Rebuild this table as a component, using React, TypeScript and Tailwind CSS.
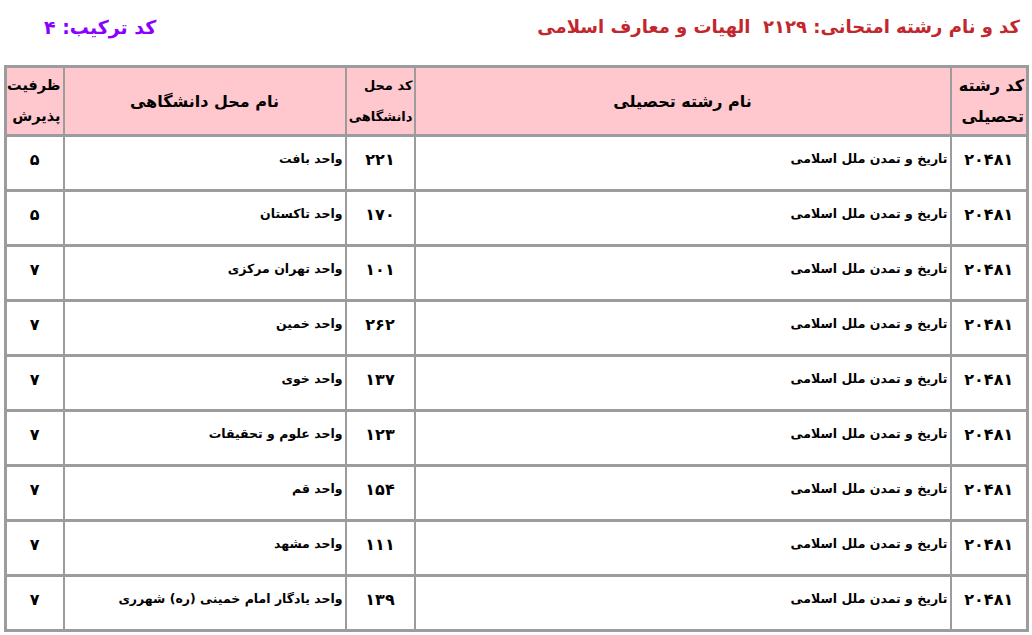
const rows: { code: string; place: string; cap: string }[] = [
  { code: "۲۲۱", place: "واحد بافت", cap: "۵" },
  { code: "۱۷۰", place: "واحد تاکستان", cap: "۵" },
  { code: "۱۰۱", place: "واحد تهران مرکزی", cap: "۷" },
  { code: "۲۶۲", place: "واحد خمین", cap: "۷" },
  { code: "۱۳۷", place: "واحد خوی", cap: "۷" },
  { code: "۱۲۳", place: "واحد علوم و تحقیقات", cap: "۷" },
  { code: "۱۵۴", place: "واحد قم", cap: "۷" },
  { code: "۱۱۱", place: "واحد مشهد", cap: "۷" },
  { code: "۱۳۹", place: "واحد یادگار امام خمینی (ره) شهرری", cap: "۷" },
];

const font = { fontFamily: '"DejaVu Sans", Tahoma, sans-serif' };

export default function App() {
  return (
    <div dir="rtl" className="h-[635px] w-[1032px] overflow-hidden bg-white" style={font}>
      <header className="flex h-[62px] items-start justify-between px-[12px] pt-[13px]">
        <h1 className="text-[18px] font-bold text-[#c1272d]">
          کد و نام رشته امتحانی: ۲۱۲۹&nbsp;&nbsp;الهیات و معارف اسلامی
        </h1>
        <p className="pl-[32px] text-[19px] font-bold text-[#8a00ff]">کد ترکیب: ۴</p>
      </header>

      <table className="ml-[6px] mr-[3px] mt-[3px] w-[1023px] table-fixed border-collapse border-[3px] border-[#9c9c9c]">
        <colgroup>
          <col className="w-[77px]" />
          <col className="w-[536px]" />
          <col className="w-[69px]" />
          <col className="w-[282px]" />
          <col className="w-[58px]" />
        </colgroup>
        <thead>
          <tr className="h-[69px] bg-[#ffc7ce] text-[16px] font-bold leading-[31px] text-black">
            <th className="border-x-2 border-b-[3px] border-[#9c9c9c] px-[2px] text-right align-middle">
              کد رشته<br />تحصیلی
            </th>
            <th className="border-x-2 border-b-[3px] border-[#9c9c9c] text-center align-middle">نام رشته تحصیلی</th>
            <th className="border-x-2 border-b-[3px] border-[#9c9c9c] px-[1px] text-right align-middle text-[13px]">
              کد محل<br />دانشگاهی
            </th>
            <th className="border-x-2 border-b-[3px] border-[#9c9c9c] text-center align-middle">نام محل دانشگاهی</th>
            <th className="border-x-2 border-b-[3px] border-[#9c9c9c] px-[2px] text-right align-middle text-[14.5px]">
              ظرفیت<br />پذیرش
            </th>
          </tr>
        </thead>
        <tbody>
          {rows.map((row, i) => (
            <tr key={i} className="h-[55px] font-bold text-black">
              <td className="border-x-2 border-b-[3px] border-[#9c9c9c] pt-[11px] text-center align-top text-[16px]">
                ۲۰۴۸۱
              </td>
              <td className="border-x-2 border-b-[3px] border-[#9c9c9c] pr-[2px] pt-[13px] text-right align-top text-[12.5px]">
                تاریخ و تمدن ملل اسلامی
              </td>
              <td className="border-x-2 border-b-[3px] border-[#9c9c9c] pt-[11px] text-center align-top text-[16px]">
                {row.code}
              </td>
              <td className="border-x-2 border-b-[3px] border-[#9c9c9c] pr-[2px] pt-[13px] text-right align-top text-[12.5px]">
                {row.place}
              </td>
              <td className="border-x-2 border-b-[3px] border-[#9c9c9c] pt-[11px] text-center align-top text-[16px]">
                {row.cap}
              </td>
            </tr>
          ))}
        </tbody>
      </table>
    </div>
  );
}
